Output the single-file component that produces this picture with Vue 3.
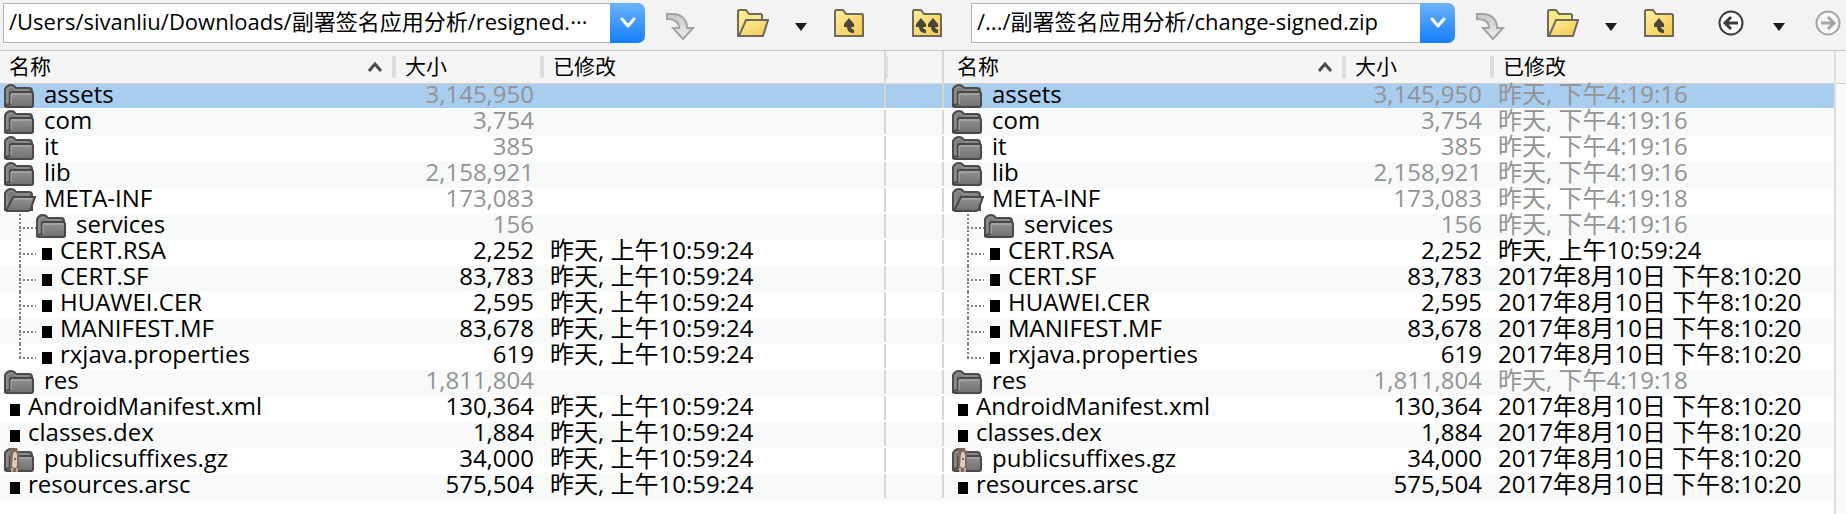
<script setup>
const yesterday = '昨天, 上午10:59:24'
const august = '2017年8月10日 下午8:10:20'

const rows = [
  { name: 'assets', kind: 'folder', size: '3,145,950', left: '', right: '昨天, 下午4:19:16', selected: true },
  { name: 'com', kind: 'folder', size: '3,754', left: '', right: '昨天, 下午4:19:16' },
  { name: 'it', kind: 'folder', size: '385', left: '', right: '昨天, 下午4:19:16' },
  { name: 'lib', kind: 'folder', size: '2,158,921', left: '', right: '昨天, 下午4:19:16' },
  { name: 'META-INF', kind: 'open', size: '173,083', left: '', right: '昨天, 下午4:19:18' },
  { name: 'services', kind: 'folder', nested: true, size: '156', left: '', right: '昨天, 下午4:19:16' },
  { name: 'CERT.RSA', kind: 'file', nested: true, size: '2,252', left: yesterday, right: yesterday },
  { name: 'CERT.SF', kind: 'file', nested: true, size: '83,783', left: yesterday, right: august },
  { name: 'HUAWEI.CER', kind: 'file', nested: true, size: '2,595', left: yesterday, right: august },
  { name: 'MANIFEST.MF', kind: 'file', nested: true, size: '83,678', left: yesterday, right: august },
  { name: 'rxjava.properties', kind: 'file', nested: true, last: true, size: '619', left: yesterday, right: august },
  { name: 'res', kind: 'folder', size: '1,811,804', left: '', right: '昨天, 下午4:19:18' },
  { name: 'AndroidManifest.xml', kind: 'file', size: '130,364', left: yesterday, right: august },
  { name: 'classes.dex', kind: 'file', size: '1,884', left: yesterday, right: august },
  { name: 'publicsuffixes.gz', kind: 'archive', size: '34,000', left: yesterday, right: august },
  { name: 'resources.arsc', kind: 'file', size: '575,504', left: yesterday, right: august }
]

const isFolder = (row) => row.kind === 'folder' || row.kind === 'open'

const toolbars = [
  { side: 'left', path: '/Users/sivanliu/Downloads/副署签名应用分析/resigned.···' },
  { side: 'right', path: '/.../副署签名应用分析/change-signed.zip' }
]
</script>

<template>
  <main class="page">
    <svg class="defs" width="0" height="0" aria-hidden="true">
      <defs>
        <linearGradient id="yellow" x1="0" y1="0" x2="1" y2="1">
          <stop offset="0" stop-color="#fff0a0" />
          <stop offset="1" stop-color="#f5c64c" />
        </linearGradient>
        <linearGradient id="silver" x1="0" y1="0" x2="0" y2="1">
          <stop offset="0" stop-color="#c9c9c9" />
          <stop offset="1" stop-color="#eeeeee" />
        </linearGradient>
        <linearGradient id="slate" x1="0" y1="0" x2="0" y2="1">
          <stop offset="0" stop-color="#939393" />
          <stop offset="1" stop-color="#707070" />
        </linearGradient>
      </defs>
    </svg>

    <header class="toolbar">
      <template v-for="bar in toolbars" :key="bar.side">
        <div class="combo" :class="bar.side">
          <input type="text" :value="bar.path" aria-label="路径" spellcheck="false" />
          <button type="button" class="drop" aria-label="历史路径">
            <svg width="18" height="12" viewBox="0 0 18 12"><path d="M3 2l6 7 6-7" fill="none" stroke="#fff" stroke-width="3" stroke-linecap="round" stroke-linejoin="round" /></svg>
          </button>
        </div>
        <button type="button" class="tool" aria-label="转到">
          <svg width="30" height="34" viewBox="0 0 30 34"><path d="M1 8H7C15 8 21 13 21 22H27L17 33 7 22H13C13 16 9 13 1 13Z" fill="url(#silver)" stroke="#a3a3a3" stroke-width="2" /></svg>
        </button>
        <button type="button" class="tool" aria-label="打开文件夹">
          <svg width="32" height="28" viewBox="0 0 32 28">
            <path d="M1 27V2L2 1H9L12 5H24L25 6V10L20 27Z" fill="#fde98c" stroke="#6e6a5c" stroke-width="2" />
            <path d="M9 11H31L26 27H2Z" fill="url(#yellow)" stroke="#6e6a5c" stroke-width="2" />
          </svg>
        </button>
        <button type="button" class="tool narrow" aria-label="打开菜单">
          <svg width="14" height="16" viewBox="0 0 14 16"><path d="M1 8H13L7 16Z" fill="#1c1c1c" /></svg>
        </button>
        <button type="button" class="tool" aria-label="上级文件夹">
          <svg width="30" height="28" viewBox="0 0 30 28">
            <path d="M1 27V2L2 1H9L12 5H28L29 6V27Z" fill="url(#yellow)" stroke="#6e6a5c" stroke-width="2" />
            <path d="M15 9L10 15V18H13Q13 23 18 24H20V21Q17 20 17 18H20V15Z" fill="#4a463c" />
          </svg>
        </button>
        <button v-if="bar.side === 'left'" type="button" class="tool both" aria-label="两侧上级文件夹">
          <svg width="30" height="28" viewBox="0 0 30 28">
            <path d="M1 27V2L2 1H9L12 5H28L29 6V27Z" fill="url(#yellow)" stroke="#6e6a5c" stroke-width="2" />
            <path d="M9 9L4 15V18H7Q7 23 12 24H14V21Q11 20 11 18H14V15Z" fill="#4a463c" />
            <path d="M21 9L16 15V18H19Q19 23 24 24H26V21Q23 20 23 18H26V15Z" fill="#4a463c" />
          </svg>
        </button>
        <template v-else>
          <button type="button" class="tool" aria-label="后退">
            <svg width="26" height="26" viewBox="0 0 26 26" fill="none" stroke="#3c3c3c">
              <circle cx="13" cy="13" r="11.5" fill="#fff" stroke-width="2" />
              <path d="M20 13H8M13 7L7 13l6 6" stroke-width="3" />
            </svg>
          </button>
          <button type="button" class="tool narrow" aria-label="后退记录">
            <svg width="14" height="16" viewBox="0 0 14 16"><path d="M1 8H13L7 16Z" fill="#1c1c1c" /></svg>
          </button>
          <button type="button" class="tool forward" aria-label="前进">
            <svg width="26" height="26" viewBox="0 0 26 26" fill="none" stroke="#a6a6a6">
              <circle cx="13" cy="13" r="11.5" fill="#f8f8f8" stroke-width="2" />
              <path d="M6 13H18M13 7l6 6-6 6" stroke-width="3" />
            </svg>
          </button>
        </template>
      </template>
    </header>

    <section class="compare">
      <template v-for="side in ['left', 'right']" :key="side">
        <table class="pane" :class="side">
          <colgroup>
            <col />
            <col class="size-col" />
            <col class="date-col" />
          </colgroup>
          <thead>
            <tr>
              <th scope="col">
                <div class="head name-head">
                  <span>名称</span>
                  <svg width="16" height="10" viewBox="0 0 16 10"><path d="M2 9L8 2l6 7" fill="none" stroke="#4c4c4c" stroke-width="3" /></svg>
                  <i class="bar"></i>
                </div>
              </th>
              <th scope="col"><div class="head"><span>大小</span><i class="bar"></i></div></th>
              <th scope="col"><div class="head"><span>已修改</span></div></th>
            </tr>
          </thead>
          <tbody>
            <tr v-for="row in rows" :key="row.name" :class="{ selected: row.selected, dim: isFolder(row) }">
              <td>
                <div class="entry">
                  <i v-if="row.nested" class="guide" :class="{ last: row.last }"></i>
                  <i v-if="row.kind === 'file'" class="file"></i>
                  <svg v-else class="icon" width="32" height="24" viewBox="0 0 32 24">
                    <path d="M1 22V5Q3 1 7 1Q10 1 12 4H25Q28 4 28 7V22Z" fill="#7d7d7d" stroke="#4c4c4c" stroke-width="2" />
                    <path d="M3 20V6Q5 3 7 3Q10 3 12 6H25" fill="none" stroke="#999" />
                    <template v-if="row.kind === 'open'">
                      <path d="M9 9H31L27 20Q26 23 24 23H3Q2 23 3 21Z" fill="url(#slate)" stroke="#484848" stroke-width="2" />
                      <path d="M10 11H28" fill="none" stroke="#b4b4b4" />
                    </template>
                    <template v-else>
                      <path d="M6 9Q6 8 8 8H27Q29 8 29 10V21Q29 23 27 23H3Q1 23 1 21L6 20Z" fill="url(#slate)" stroke="#484848" stroke-width="2" />
                      <path d="M7 20V10H27" fill="none" stroke="#b4b4b4" />
                    </template>
                    <template v-if="row.kind === 'archive'">
                      <path d="M7 0H13L15 6V21L13 24H8L6 21V6Z" fill="#82695a" />
                      <path d="M9 6Q11 1 13 6V18Q11 22 8 18Z" fill="#ddcdbf" />
                      <circle cx="11" cy="11" r="1" fill="#5c4033" />
                      <path d="M8 24V20M13 24V20" stroke="#e9e9e9" stroke-width="1" />
                    </template>
                  </svg>
                  <span>{{ row.name }}</span>
                </div>
              </td>
              <td class="size">{{ row.size }}</td>
              <td class="date">{{ row[side] }}</td>
            </tr>
          </tbody>
        </table>
        <div v-if="side === 'left'" class="gutter">
          <div class="gutter-head"><i class="bar"></i></div>
          <div v-for="row in rows" :key="row.name" class="gutter-row" :class="{ selected: row.selected }"></div>
        </div>
      </template>
      <div class="edge"><div class="edge-head"></div></div>
    </section>
  </main>
</template>

<style>
body {
  margin: 0;
  background: #fff;
}
</style>

<style scoped>
.page {
  display: flex;
  flex-direction: column;
  min-height: 100vh;
  font-family: "Open Sans", "Noto Sans CJK SC", sans-serif;
  font-size: 24px;
  color: #000;
  overflow: hidden;
}
.defs {
  position: absolute;
}
.toolbar {
  display: flex;
  align-items: center;
  box-sizing: border-box;
  height: 51px;
  padding: 0 0 4px 3px;
  background: #f3f3f3;
  border-bottom: 1px solid #c8c8c8;
}
.combo {
  display: flex;
  min-width: 0;
  height: 40px;
}
.combo.left {
  flex: 642 1 0;
}
.combo.right {
  flex: 484 1 0;
}
.combo input {
  flex: 1;
  min-width: 0;
  box-sizing: border-box;
  padding: 0 4px 6px 5px;
  border: 1px solid #b4b4b4;
  border-right: 0;
  border-radius: 0;
  background: #fff;
  color: #000;
  font: inherit;
  font-size: 22px;
  outline: none;
}
.drop {
  display: flex;
  align-items: center;
  justify-content: center;
  width: 35px;
  padding: 0;
  border: 0;
  border-radius: 0 7px 7px 0;
  background: linear-gradient(#6bb3fa, #167efb);
}
.tool {
  display: flex;
  flex: none;
  align-items: center;
  justify-content: center;
  width: 72px;
  height: 40px;
  padding: 0;
  border: 0;
  background: none;
}
.tool.narrow {
  width: 24px;
}
.tool.both {
  margin: 0 8px 0 6px;
}
.tool.forward {
  justify-content: flex-end;
  width: 55px;
  padding-right: 5px;
}
.compare {
  display: grid;
  flex: 1;
  grid-template-columns: 884fr 60px 890fr 12px;
}
.pane {
  width: 100%;
  align-self: start;
  table-layout: fixed;
  border-collapse: collapse;
}
.size-col {
  width: 148px;
}
.date-col {
  width: 340px;
}
th,
td {
  padding: 0;
  font-weight: 400;
  text-align: left;
  white-space: nowrap;
}
.head {
  display: flex;
  align-items: center;
  box-sizing: border-box;
  height: 33px;
  padding-left: 9px;
  background: #f5f5f5;
  border-bottom: 1px solid #cfcfcf;
  font-size: 21px;
}
.head span {
  flex: 1;
  padding-bottom: 2px;
  line-height: 30px;
}
.name-head {
  gap: 9px;
}
.right .name-head {
  padding-left: 13px;
}
.bar {
  width: 4px;
  height: 22px;
  background: #dedede;
}
tbody tr {
  height: 26px;
}
tbody tr:nth-child(even) {
  background: #f7faf9;
}
tbody .selected,
.gutter-row.selected {
  background-color: #fff;
  background-image: linear-gradient(#a9cdef 24px, #fff 24px);
}
td {
  height: 26px;
  vertical-align: top;
  line-height: 20px;
}
.entry {
  display: flex;
  align-items: flex-start;
  height: 26px;
  padding-left: 4px;
}
.right .entry {
  padding-left: 8px;
}
.icon {
  flex: none;
  margin-right: 8px;
}
.file {
  flex: none;
  width: 10px;
  height: 12px;
  margin: 8px 8px 0 6px;
  background: #000;
}
.guide {
  flex: none;
  width: 17px;
  height: 26px;
  margin-left: 15px;
  background:
    repeating-linear-gradient(#808080 0 2px, transparent 2px 4px) 0 0 / 2px 26px no-repeat,
    repeating-linear-gradient(90deg, #808080 0 2px, transparent 2px 4px) 0 13px / 17px 2px no-repeat;
}
.guide.last {
  background-size: 2px 14px, 17px 2px;
}
.size {
  padding-right: 10px;
  text-align: right;
}
.date {
  padding-left: 6px;
}
.right .size {
  padding-right: 12px;
}
.right .date {
  padding-left: 4px;
}
.dim .size,
.dim .date {
  color: #939393;
}
.gutter-head {
  display: flex;
  align-items: center;
  box-sizing: border-box;
  height: 33px;
  background: #f5f5f5;
  border: solid #d8d8d8;
  border-width: 0 2px 1px;
}
.gutter-head .bar {
  width: 2px;
}
.gutter-row {
  box-sizing: border-box;
  height: 26px;
  border: solid;
  border-width: 0 2px;
  border-image: linear-gradient(#d6d6d6 24px, #fff 24px) 0 2;
}
.gutter-row:nth-child(odd) {
  background: #f7faf9;
}
.edge {
  background: #fafafa;
  border-left: 2px solid #dedede;
}
.edge-head {
  box-sizing: border-box;
  height: 33px;
  background: #f5f5f5;
  border-bottom: 1px solid #cfcfcf;
}
</style>
